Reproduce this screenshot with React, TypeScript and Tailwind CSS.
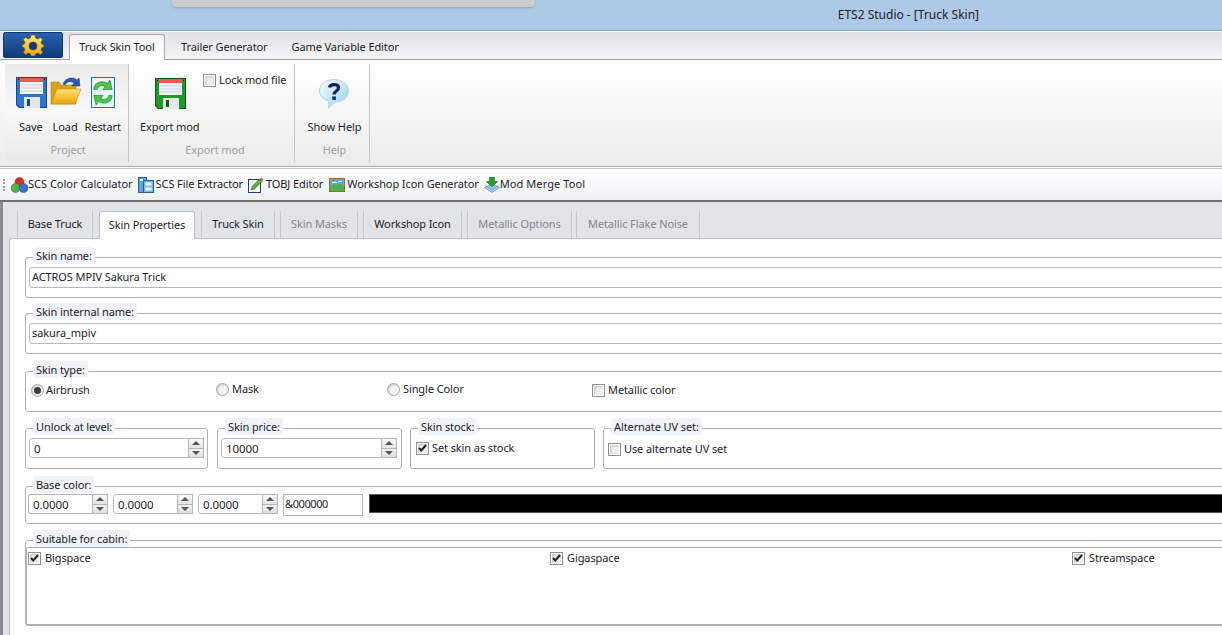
import React from "react";

const Floppy = ({ dark, mid }: { dark: string; mid: string }) => (
  <svg width="31" height="31" viewBox="0 0 31 31" className="block">
    <path d="M0 0H31V31H3L0 28Z" fill={dark} />
    <path d="M1 1H30V30H4L1 27Z" fill={mid} />
    <rect x="4" y="1" width="23" height="16" fill="#f4f7fa" />
    <rect x="4" y="1" width="23" height="4" fill="#ee5a50" />
    <path d="M5 8H26M5 11H26M5 14H26" stroke="#bcd0e0" strokeWidth="1" />
    <rect x="8" y="20" width="16" height="11" fill="#e4e6e8" />
    <rect x="11" y="22" width="3" height="7" fill={dark} />
    <rect x="2" y="2" width="1" height="1" fill="#111" />
    <rect x="28" y="2" width="1" height="1" fill="#111" />
  </svg>
);

const FolderIcon = () => (
  <svg width="32" height="32" viewBox="0 0 32 32" className="block">
    <defs>
      <linearGradient id="fold" x1="0" y1="0" x2="0" y2="1">
        <stop offset="0" stopColor="#ffe27a" />
        <stop offset="1" stopColor="#eda500" />
      </linearGradient>
    </defs>
    <path d="M1 6H9L11 9H26V28H1Z" fill="#d9a21c" stroke="#b98a1a" strokeWidth="0.6" />
    <path d="M7 13H31L25 28H1Z" fill="url(#fold)" stroke="#c48e10" strokeWidth="0.6" />
    <path d="M13 8C15 2 23 0 27 4L29 2L30 10L22 10L24 7C21 5 17 5 15 9Z" fill="#2a5aa8" stroke="#1c3f80" strokeWidth="0.5" />
  </svg>
);

const RestartIcon = () => (
  <svg width="24" height="31" viewBox="0 0 24 31" className="block">
    <rect x="0.5" y="0.5" width="23" height="30" fill="#e8f4fc" stroke="#1d74b4" />
    <g transform="translate(12 15.5) scale(1.15 1.2) translate(-12 -15.5)">
      <path d="M4 13C4 7 11 5 16 8L18 5L20 13L12 13L14 10.5C11 9 8 10 7 13Z" fill="#4fc44a" stroke="#23902c" strokeWidth="0.6" />
      <path d="M20 18C20 24 13 26 8 23L6 26L4 18L12 18L10 20.5C13 22 16 21 17 18Z" fill="#4fc44a" stroke="#23902c" strokeWidth="0.6" />
    </g>
  </svg>
);

const HelpIcon = () => (
  <svg width="30" height="30" viewBox="0 0 30 30" className="block">
    <defs>
      <linearGradient id="bub" x1="0" y1="0" x2="1" y2="1">
        <stop offset="0" stopColor="#ffffff" />
        <stop offset="1" stopColor="#8fd0f2" />
      </linearGradient>
    </defs>
    <path d="M15 0.5C23 0.5 29.5 5 29.5 12C29.5 19 23 23 16 23C14 25 11 29 9 29C10 26 10 24 9 22C4 20 0.5 17 0.5 12C0.5 5 7 0.5 15 0.5Z" fill="url(#bub)" stroke="#b8d4e4" />
    <path d="M10.5 8.5C11 5 19 4.5 19.5 8.5C20 12 15 12 15 15.5" fill="none" stroke="#16206a" strokeWidth="3.2" />
    <rect x="13.3" y="17.5" width="3.6" height="3.4" fill="#16206a" />
  </svg>
);

const GearIcon = () => (
  <svg width="22" height="22" viewBox="0 0 22 22" className="block">
    <defs>
      <linearGradient id="gear" x1="0" y1="0" x2="0" y2="1">
        <stop offset="0" stopColor="#ffe98a" />
        <stop offset="1" stopColor="#e8a512" />
      </linearGradient>
    </defs>
    <path
      d="M9 1H13L13.6 4L16 5L18.5 3.2L20.8 5.7L19 8.2L19.9 10.1L22 10.9V12.9L19.9 13.6L19 16L20.8 18.3L18.4 20.7L16 19L13.6 20L13 22H9L8.4 20L6 19L3.6 20.7L1.2 18.3L3 16L2.1 13.6L0 12.9V10.9L2.1 10.1L3 8.2L1.2 5.7L3.5 3.2L6 5L8.4 4Z"
      fill="url(#gear)"
      stroke="#6d4a10"
      strokeWidth="0.7"
    />
    <circle cx="11" cy="12" r="4" fill="#12397c" stroke="#6d4a10" strokeWidth="0.7" />
  </svg>
);

const BallsIcon = () => (
  <svg width="17" height="16" viewBox="0 0 17 16" className="block">
    <circle cx="8.5" cy="5" r="4.5" fill="#dc2f24" stroke="#8c1a14" strokeWidth="0.5" />
    <circle cx="4.5" cy="11" r="4.5" fill="#4fb53c" stroke="#2a7a20" strokeWidth="0.5" />
    <circle cx="12.5" cy="11" r="4.5" fill="#3f6fd0" stroke="#24458c" strokeWidth="0.5" />
  </svg>
);

const CabinetIcon = () => (
  <svg width="16" height="16" viewBox="0 0 16 16" className="block">
    <rect x="0.5" y="0.5" width="8" height="15" fill="#5fa4e0" stroke="#24609c" />
    <rect x="5.5" y="3.5" width="10" height="12" fill="#7ab8ea" stroke="#24609c" />
    <rect x="7.5" y="5.5" width="6" height="3" fill="#eaf4fc" />
    <rect x="7.5" y="10.5" width="6" height="3" fill="#eaf4fc" />
    <rect x="2" y="2" width="3" height="2" fill="#eaf4fc" />
  </svg>
);

const PencilIcon = () => (
  <svg width="16" height="16" viewBox="0 0 16 16" className="block">
    <rect x="0.5" y="2.5" width="12" height="13" fill="#ffffff" stroke="#1c3f80" />
    <path d="M3 13L4 9.5L11.5 2L14 4.5L6.5 12Z" fill="#5cae3c" stroke="#2c6c1c" strokeWidth="0.6" />
    <path d="M11.5 2L13 0.5L15.5 3L14 4.5Z" fill="#e24c3c" />
  </svg>
);

const PictureIcon = () => (
  <svg width="16" height="14" viewBox="0 0 16 14" className="block">
    <rect x="0.5" y="0.5" width="15" height="13" fill="#5aa8ec" stroke="#a8672a" />
    <path d="M1 9L5 5L8 7L11 5L15 8V13H1Z" fill="#4fb048" />
    <path d="M3 4H8V5H3ZM9 3H13V4H9Z" fill="#ffffff" />
  </svg>
);

const MergeIcon = () => (
  <svg width="16" height="16" viewBox="0 0 16 16" className="block">
    <path d="M8 7L15.5 10.5L8 15.5L0.5 10.5Z" fill="#a8c8f0" stroke="#5b8fd8" strokeWidth="0.7" />
    <path d="M0.8 8.5L8 12.5L15.2 8.5" fill="none" stroke="#5b8fd8" strokeWidth="0.7" />
    <path d="M5.5 0H10.5V4.5H13.5L8 10L2.5 4.5H5.5Z" fill="#25a025" stroke="#14681a" strokeWidth="0.6" />
  </svg>
);

const CheckBox = ({ checked = false }: { checked?: boolean }) => (
  <span className="flex h-[13px] w-[13px] shrink-0 items-center justify-center border border-[#8e8f8f] bg-[#ececee] shadow-[inset_0_0_0_1px_#fff,inset_1px_1px_2px_1px_#c4c6ca]">
    {checked && (
      <svg width="9" height="8" viewBox="0 0 9 8">
        <path d="M1 4L3.3 6.5L8 1" fill="none" stroke="#222" strokeWidth="2" />
      </svg>
    )}
  </span>
);

const Radio = ({ checked = false, className = "" }: { checked?: boolean; className?: string }) => (
  <span className={`flex h-[13px] w-[13px] shrink-0 items-center justify-center rounded-full border border-[#a2a4a8] bg-[#f3f3f3] shadow-[inset_1px_1px_2px_#ccc] ${className}`}>
    {checked && <span className="h-[7px] w-[7px] rounded-full bg-[#3c3c3c]" />}
  </span>
);

const Group = ({ title, className, children }: { title: string; className: string; children?: React.ReactNode }) => (
  <div className={`relative shrink-0 rounded-[3px] border border-[#b0b0b6] ${className}`}>
    <span className="absolute left-[7px] top-[-11px] h-[17px] rounded-[3px] bg-[#eff2f6] px-[3px] leading-[17px]">{title}</span>
    {children}
  </div>
);

const SpinInput = ({ value, className }: { value: string; className: string }) => (
  <div className={`flex h-[20px] shrink-0 ${className}`}>
    <div className="flex-1 rounded-l-[3px] border border-[#b4b6ba] bg-white pl-[4px] text-[11.5px] leading-[19px]">{value}</div>
    <div className="flex w-[15px] flex-col border border-l-0 border-[#b4b6ba]">
      <div className="flex flex-1 items-center justify-center border-b border-[#b4b6ba] bg-gradient-to-b from-[#fafafa] to-[#e4e4e6]">
        <span className="h-0 w-0 border-x-[4px] border-b-[4px] border-x-transparent border-b-[#555]" />
      </div>
      <div className="flex flex-1 items-center justify-center bg-gradient-to-b from-[#f2f2f2] to-[#dedee0]">
        <span className="h-0 w-0 border-x-[4px] border-t-[4px] border-x-transparent border-t-[#555]" />
      </div>
    </div>
  </div>
);

const tools = [
  { icon: <BallsIcon />, label: "SCS Color Calculator", cls: "ml-[1px] tracking-normal" },
  { icon: <CabinetIcon />, label: "SCS File Extractor", cls: "ml-[5px] gap-[2px]" },
  { icon: <PencilIcon />, label: "TOBJ Editor", cls: "ml-[5px] gap-[2px]" },
  { icon: <PictureIcon />, label: "Workshop Icon Generator", cls: "ml-[6px] gap-[2px]" },
  { icon: <MergeIcon />, label: "Mod Merge Tool", cls: "ml-[5px] tracking-[0.1px]" },
];

const tabs = [
  { label: "Base Truck", cls: "ml-[7px] w-[76px]" },
  { label: "Skin Properties", cls: "ml-[6px] w-[96px]", active: true },
  { label: "Truck Skin", cls: "ml-[6px] w-[74px]" },
  { label: "Skin Masks", cls: "ml-[5px] w-[78px]", off: true },
  { label: "Workshop Icon", cls: "ml-[5px] w-[99px]" },
  { label: "Metallic Options", cls: "ml-[5px] w-[105px]", off: true },
  { label: "Metallic Flake Noise", cls: "ml-[4px] w-[124px]", off: true },
];

export default function App() {
  return (
    <div className="relative h-[635px] w-[1222px] overflow-hidden bg-white font-['Noto_Sans',sans-serif] text-[11px] tracking-[-0.1px] text-[#1c1c2a]">
      {/* title bar */}
      <div className="absolute left-[172px] top-0 h-[7px] w-[363px] rounded-b-[4px] bg-[#cdcccb] shadow-[0_1px_2px_#8fa6bf]" />
      <div className="flex h-[31px] items-center justify-end border-b border-[#8fa3ba] bg-[#adc9e7] pr-[243px] text-[12px] tracking-normal text-[#222]">
        ETS2 Studio - [Truck Skin]
      </div>

      {/* ribbon tabs */}
      <div className="flex h-[29px] items-start border-t border-white border-b border-b-[#a0a0a0] bg-gradient-to-b from-[#dfe1e4] to-[#f4f5f6] pl-[3px]">
        <div className="flex h-[26px] w-[60px] items-center justify-center rounded-[2px] border border-[#12386f] bg-gradient-to-b from-[#2a63ad] to-[#0f3a7c]">
          <GearIcon />
        </div>
        <div className="ml-[6px] mt-[2px] flex h-[26px] w-[96px] items-center justify-center rounded-t-[3px] border border-b-0 border-[#a8a8a8] bg-gradient-to-b from-[#f4f4f4] to-white">
          Truck Skin Tool
        </div>
        <div className="ml-[16px] mt-[2px] h-[26px] leading-[26px]">Trailer Generator</div>
        <div className="ml-[24px] mt-[2px] h-[26px] leading-[26px]">Game Variable Editor</div>
      </div>

      {/* ribbon body */}
      <div className="flex h-[107px] border-b border-[#a8a8a8] bg-gradient-to-b from-white to-[#ececec] pl-[5px] pt-[4px]">
        <div className="flex h-[98px] w-[123px] flex-col bg-gradient-to-b from-[#ebebeb] via-[#f7f7f7] to-[#e9e9e9]">
          <div className="ml-[11px] mt-[10px] flex h-[34px] items-end">
            <Floppy dark="#16458c" mid="#2a76d2" />
            <span className="ml-[3px]"><FolderIcon /></span>
            <span className="ml-[9px]"><RestartIcon /></span>
          </div>
          <div className="ml-[14px] mt-[11px] flex h-[16px] items-center">
            <span>Save</span>
            <span className="ml-[10px]">Load</span>
            <span className="ml-[7px]">Restart</span>
          </div>
          <div className="mt-[7px] pl-[3px] text-center text-[#a0a0a6]">Project</div>
        </div>
        <div className="relative h-[98px] w-[166px] border-l border-[#c4c4c4]">
          <div className="ml-[26px] mt-[14px]">
            <Floppy dark="#0e5a12" mid="#1c9a24" />
          </div>
          <div className="absolute left-[74px] top-[8px] flex items-center gap-[3px]">
            <CheckBox />
            <span>Lock mod file</span>
          </div>
          <div className="ml-[11px] mt-[10px] h-[16px] leading-[16px]">Export mod</div>
          <div className="mt-[7px] pl-[7px] text-center text-[#a0a0a6]">Export mod</div>
        </div>
        <div className="h-[98px] w-[76px] border-x border-[#c4c4c4] pl-[5px] text-center">
          <div className="ml-[19px] mt-[15px]">
            <HelpIcon />
          </div>
          <div className="mt-[10px] h-[16px] leading-[16px]">Show Help</div>
          <div className="mt-[7px] text-[#a0a0a6]">Help</div>
        </div>
      </div>

      {/* quick tools */}
      <div className="mt-px flex h-[34px] items-center border-t border-[#c8c8cc] border-b-2 border-b-[#6f6f6f] bg-gradient-to-b from-white to-[#eef0f3] pl-[3px]">
        <span className="h-[12px] w-[2px] border-l-2 border-dotted border-[#9a9a9a]" />
        <div className="ml-[5px] flex items-center">
          {tools.map((t) => (
            <div key={t.label} className={`flex items-center ${t.cls}`}>
              {t.icon}
              <span className="whitespace-nowrap">{t.label}</span>
            </div>
          ))}
        </div>
      </div>

      {/* tab area */}
      <div className="flex h-[433px] flex-col border-l-[3px] border-[#8a8a8a] bg-[#e0e3e8]">
        <div className="flex h-[36px] items-end pl-[7px]">
          {tabs.map((t) =>
            t.active ? (
              <div key={t.label} className={`relative z-10 -mb-px flex h-[28px] items-center justify-center rounded-t-[3px] border border-b-0 border-[#c0c0c4] bg-white ${t.cls}`}>
                {t.label}
              </div>
            ) : (
              <div key={t.label} className={`flex h-[27px] items-center justify-center border-x border-[#c6c8cc] ${t.off ? "text-[#85878c]" : ""} ${t.cls}`}>
                {t.label}
              </div>
            ),
          )}
        </div>
        <div className="ml-[6px] flex-1 rounded-tl-[3px] border-l border-t border-[#c0c0c4] bg-white pl-[15px]">
          <Group title="Skin name:" className="mt-[18px] h-[41px] w-[1300px] pl-[3px] pt-[9px]">
            <div className="h-[21px] rounded-[3px] border border-[#b8b8bc] pl-[2px] leading-[17px]">ACTROS MPIV Sakura Trick</div>
          </Group>
          <Group title="Skin internal name:" className="mt-[15px] h-[41px] w-[1300px] pl-[3px] pt-[9px]">
            <div className="h-[21px] rounded-[3px] border border-[#b8b8bc] pl-[2px] leading-[17px]">sakura_mpiv</div>
          </Group>
          <Group title="Skin type:" className="mt-[17px] h-[41px] w-[1300px]">
            <div className="ml-[5px] mt-[10px] flex items-center">
              <Radio checked />
              <span className="ml-[2px] w-[170px]">Airbrush</span>
              <Radio className="mt-[-2px]" />
              <span className="ml-[3px] mt-[-2px] w-[155px]">Mask</span>
              <Radio className="mt-[-2px]" />
              <span className="ml-[3px] mt-[-2px] w-[189px]">Single Color</span>
              <CheckBox />
              <span className="ml-[3px]">Metallic color</span>
            </div>
          </Group>
          <div className="mt-[16px] flex h-[41px]">
            <Group title="Unlock at level:" className="w-[183px] pl-[3px] pt-[9px]">
              <SpinInput value="0" className="w-[175px]" />
            </Group>
            <Group title="Skin price:" className="ml-[9px] w-[185px] pl-[3px] pt-[9px]">
              <SpinInput value="10000" className="w-[176px]" />
            </Group>
            <Group title="Skin stock:" className="ml-[8px] w-[185px]">
              <div className="ml-[5px] mt-[11px] flex items-center gap-[3px]">
                <CheckBox checked />
                <span>Set skin as stock</span>
              </div>
            </Group>
            <Group title="Alternate UV set:" className="ml-[8px] w-[700px]">
              <div className="ml-[4px] mt-[12px] flex items-center gap-[3px]">
                <CheckBox />
                <span>Use alternate UV set</span>
              </div>
            </Group>
          </div>
          <Group title="Base color:" className="mt-[17px] h-[38px] w-[1300px]">
            <div className="ml-[2px] mt-[7px] flex">
              <SpinInput value="0.0000" className="w-[80px]" />
              <SpinInput value="0.0000" className="ml-[5px] w-[80px]" />
              <SpinInput value="0.0000" className="ml-[5px] w-[80px]" />
              <div className="ml-[5px] h-[22px] w-[80px] border border-[#b4b6ba] pl-[1px] text-[11px] leading-[17px] tracking-[-0.4px]">&amp;000000</div>
              <div className="ml-[6px] h-[19px] flex-1 border border-[#555] bg-black" />
            </div>
          </Group>
          <Group title="Suitable for cabin:" className="mt-[16px] h-[86px] w-[1300px] pt-[6px]">
            <div className="grid h-[79px] grid-cols-[522px_522px_1fr] rounded-[2px] border-2 border-t border-l border-[#b0b0b6] pl-[1px] pt-[3px]">
              <div className="flex h-[14px] items-center gap-[4px]">
                <CheckBox checked />
                <span>Bigspace</span>
              </div>
              <div className="flex h-[14px] items-center gap-[4px]">
                <CheckBox checked />
                <span>Gigaspace</span>
              </div>
              <div className="flex h-[14px] items-center gap-[4px]">
                <CheckBox checked />
                <span>Streamspace</span>
              </div>
            </div>
          </Group>
        </div>
      </div>
    </div>
  );
}
